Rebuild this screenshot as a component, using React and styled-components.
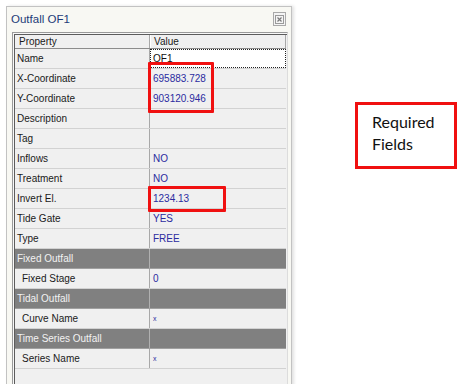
import React from 'react';
import styled, { createGlobalStyle } from 'styled-components';

const GlobalStyle = createGlobalStyle`
  html, body {
    margin: 0;
    padding: 0;
    background: #ffffff;
  }
  * {
    box-sizing: border-box;
  }
`;

const Page = styled.div`
  position: relative;
  display: flex;
  align-items: flex-start;
  width: 461px;
  height: 384px;
  padding: 6px 0 0 6px;
  overflow: hidden;
  font-family: "Liberation Sans", Arial, sans-serif;
`;

const Window = styled.div`
  display: flex;
  flex-direction: column;
  width: 286px;
  height: 380px;
  background: #f8f8f3;
  border: 1px solid #c2c2c2;
  border-bottom: none;
  box-shadow: 2px 0 3px rgba(0, 0, 0, 0.12);
`;

const TitleBar = styled.div`
  display: flex;
  align-items: center;
  justify-content: space-between;
  height: 24px;
  padding: 0 5px 0 4px;
`;

const Title = styled.span`
  font-size: 11.5px;
  color: #1d3b78;
`;

const CloseButton = styled.div`
  display: flex;
  align-items: center;
  justify-content: center;
  width: 13px;
  height: 14px;
  border: 1px solid #a9a9a9;
  background: #f4f4f4;
`;

const Grid = styled.div`
  flex: 1;
  display: flex;
  flex-direction: column;
  margin: 1px 3px 0 5px;
  background: #f0f0f0;
  border-top: 1px solid #9a9a9a;
  border-left: 1px solid #9a9a9a;
  border-right: 1px solid #dcdcdc;
  box-shadow: inset 1px 1px 0 #f8f8f8, inset 2px 2px 0 #5c5c5c;
  padding: 2px 1px 0 2px;
`;

const HeaderRow = styled.div`
  display: grid;
  grid-template-columns: 135px 1fr;
  height: 14px;
  border-bottom: 1px solid #8c8c8c;
`;

const HeaderCell = styled.div`
  display: flex;
  align-items: center;
  padding-left: ${p => (p.$first ? '4px' : '3px')};
  font-size: 10px;
  color: #1a1a1a;
  border-right: 1px solid #a8a8a8;
  border-left: ${p => (p.$first ? 'none' : '1px solid #ffffff')};
`;

const Row = styled.div`
  display: grid;
  grid-template-columns: 135px 1fr;
  height: 20px;
  border-bottom: 1px solid ${p => (p.$group ? '#a0a0a0' : '#d2d2d2')};
  background: ${p => (p.$group ? '#808080' : '#f0f0f0')};
`;

const LabelCell = styled.div`
  display: flex;
  align-items: center;
  padding-left: ${p => (p.$indent ? '7px' : '2px')};
  font-size: 10px;
  color: ${p => (p.$group ? '#f2f2f2' : '#1a1a1a')};
  border-right: 1px solid ${p => (p.$group ? '#b0b0b0' : '#a8a8a8')};
  white-space: nowrap;
`;

const ValueCell = styled.div`
  display: flex;
  align-items: center;
  padding-left: 3px;
  font-size: ${p => (p.$small ? '7px' : '10px')};
  color: ${p => (p.$focus ? '#111111' : '#2b2ba0')};
  background: ${p => (p.$focus ? '#ffffff' : 'transparent')};
  outline: ${p => (p.$focus ? '1px dotted #222222' : 'none')};
  outline-offset: -1px;
`;

const RedBox = styled.div`
  position: absolute;
  border: 3px solid #f01010;
  border-radius: 1px;
`;

const Note = styled.div`
  margin: 96px 0 0 63px;
  width: 102px;
  height: 67px;
  border: 3px solid #f01010;
  padding: 6px 0 0 14px;
  font-family: Lato, "Open Sans", sans-serif;
  font-size: 16px;
  line-height: 22px;
  color: #111111;
`;

const rows = [
  { label: 'Name', value: 'OF1', focus: true },
  { label: 'X-Coordinate', value: '695883.728' },
  { label: 'Y-Coordinate', value: '903120.946' },
  { label: 'Description', value: '' },
  { label: 'Tag', value: '' },
  { label: 'Inflows', value: 'NO' },
  { label: 'Treatment', value: 'NO' },
  { label: 'Invert El.', value: '1234.13' },
  { label: 'Tide Gate', value: 'YES' },
  { label: 'Type', value: 'FREE' },
  { group: 'Fixed Outfall' },
  { label: 'Fixed Stage', value: '0', indent: true },
  { group: 'Tidal Outfall' },
  { label: 'Curve Name', value: 'x', indent: true, small: true },
  { group: 'Time Series Outfall' },
  { label: 'Series Name', value: 'x', indent: true, small: true },
];

const CloseIcon = () => (
  <svg width="9" height="9" viewBox="0 0 9 9">
    <rect x="0.5" y="0.5" width="8" height="8" fill="none" stroke="#9a9a9a" />
    <path d="M2.5 2.5 L6.5 6.5 M6.5 2.5 L2.5 6.5" stroke="#7a7a7a" strokeWidth="1.2" />
  </svg>
);

export default function App() {
  return (
    <Page>
      <GlobalStyle />
      <Window>
        <TitleBar>
          <Title>Outfall OF1</Title>
          <CloseButton>
            <CloseIcon />
          </CloseButton>
        </TitleBar>
        <Grid>
          <HeaderRow>
            <HeaderCell $first>Property</HeaderCell>
            <HeaderCell>Value</HeaderCell>
          </HeaderRow>
          {rows.map((r, i) =>
            r.group ? (
              <Row key={i} $group>
                <LabelCell $group>{r.group}</LabelCell>
                <ValueCell />
              </Row>
            ) : (
              <Row key={i}>
                <LabelCell $indent={r.indent}>{r.label}</LabelCell>
                <ValueCell $focus={r.focus} $small={r.small}>{r.value}</ValueCell>
              </Row>
            )
          )}
        </Grid>
      </Window>
      <Note>
        Required
        <br />
        Fields
      </Note>
      <RedBox style={{ left: 148, top: 62, width: 66, height: 51 }} />
      <RedBox style={{ left: 148, top: 186, width: 78, height: 26 }} />
    </Page>
  );
}
